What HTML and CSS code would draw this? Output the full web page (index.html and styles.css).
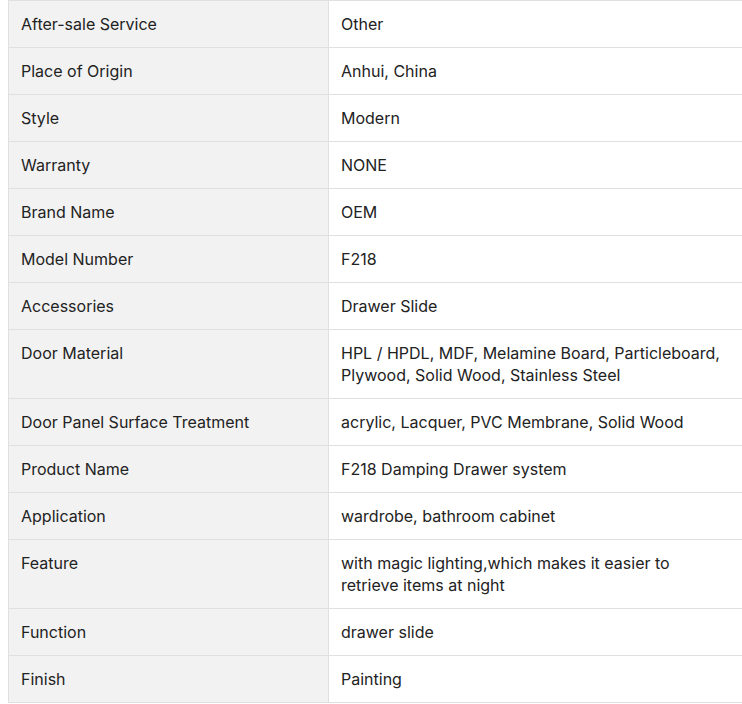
FILE: index.html
```html
<!DOCTYPE html>
<html>
<head>
<meta charset="utf-8">
<link rel="stylesheet" href="styles.css">
</head>
<body>
<table class="spec">
  <colgroup><col class="c-label"><col class="c-value"></colgroup>
  <tbody>
    <tr><td class="label">After-sale Service</td><td class="value">Other</td></tr>
    <tr><td class="label">Place of Origin</td><td class="value">Anhui, China</td></tr>
    <tr><td class="label">Style</td><td class="value">Modern</td></tr>
    <tr><td class="label">Warranty</td><td class="value">NONE</td></tr>
    <tr><td class="label">Brand Name</td><td class="value">OEM</td></tr>
    <tr><td class="label">Model Number</td><td class="value">F218</td></tr>
    <tr><td class="label">Accessories</td><td class="value">Drawer Slide</td></tr>
    <tr><td class="label">Door Material</td><td class="value">HPL / HPDL, MDF, Melamine Board, Particleboard, Plywood, Solid Wood, Stainless Steel</td></tr>
    <tr><td class="label">Door Panel Surface Treatment</td><td class="value">acrylic, Lacquer, PVC Membrane, Solid Wood</td></tr>
    <tr><td class="label">Product Name</td><td class="value">F218 Damping Drawer system</td></tr>
    <tr><td class="label">Application</td><td class="value">wardrobe, bathroom cabinet</td></tr>
    <tr><td class="label">Feature</td><td class="value">with magic lighting,which makes it easier to retrieve items at night</td></tr>
    <tr><td class="label">Function</td><td class="value">drawer slide</td></tr>
    <tr><td class="label">Finish</td><td class="value">Painting</td></tr>
  </tbody>
</table>
</body>
</html>
```

FILE: styles.css
```css
html {
  overflow: hidden;
}
body {
  margin: 0 0 0 8px;
  font-family: Inter, "Noto Sans", sans-serif;
  font-size: 16px;
  color: #222;
  background: #fff;
}
.spec {
  border-collapse: collapse;
  table-layout: fixed;
  width: 760px;
}
.c-label { width: 320px; }
.spec td {
  border: 1px solid #e0e0e0;
  padding: 12px 12px;
  line-height: 22px;
  vertical-align: top;
}
.spec .label {
  background: #f2f2f2;
}
.spec .value {
  padding-right: 42px;
}
```
